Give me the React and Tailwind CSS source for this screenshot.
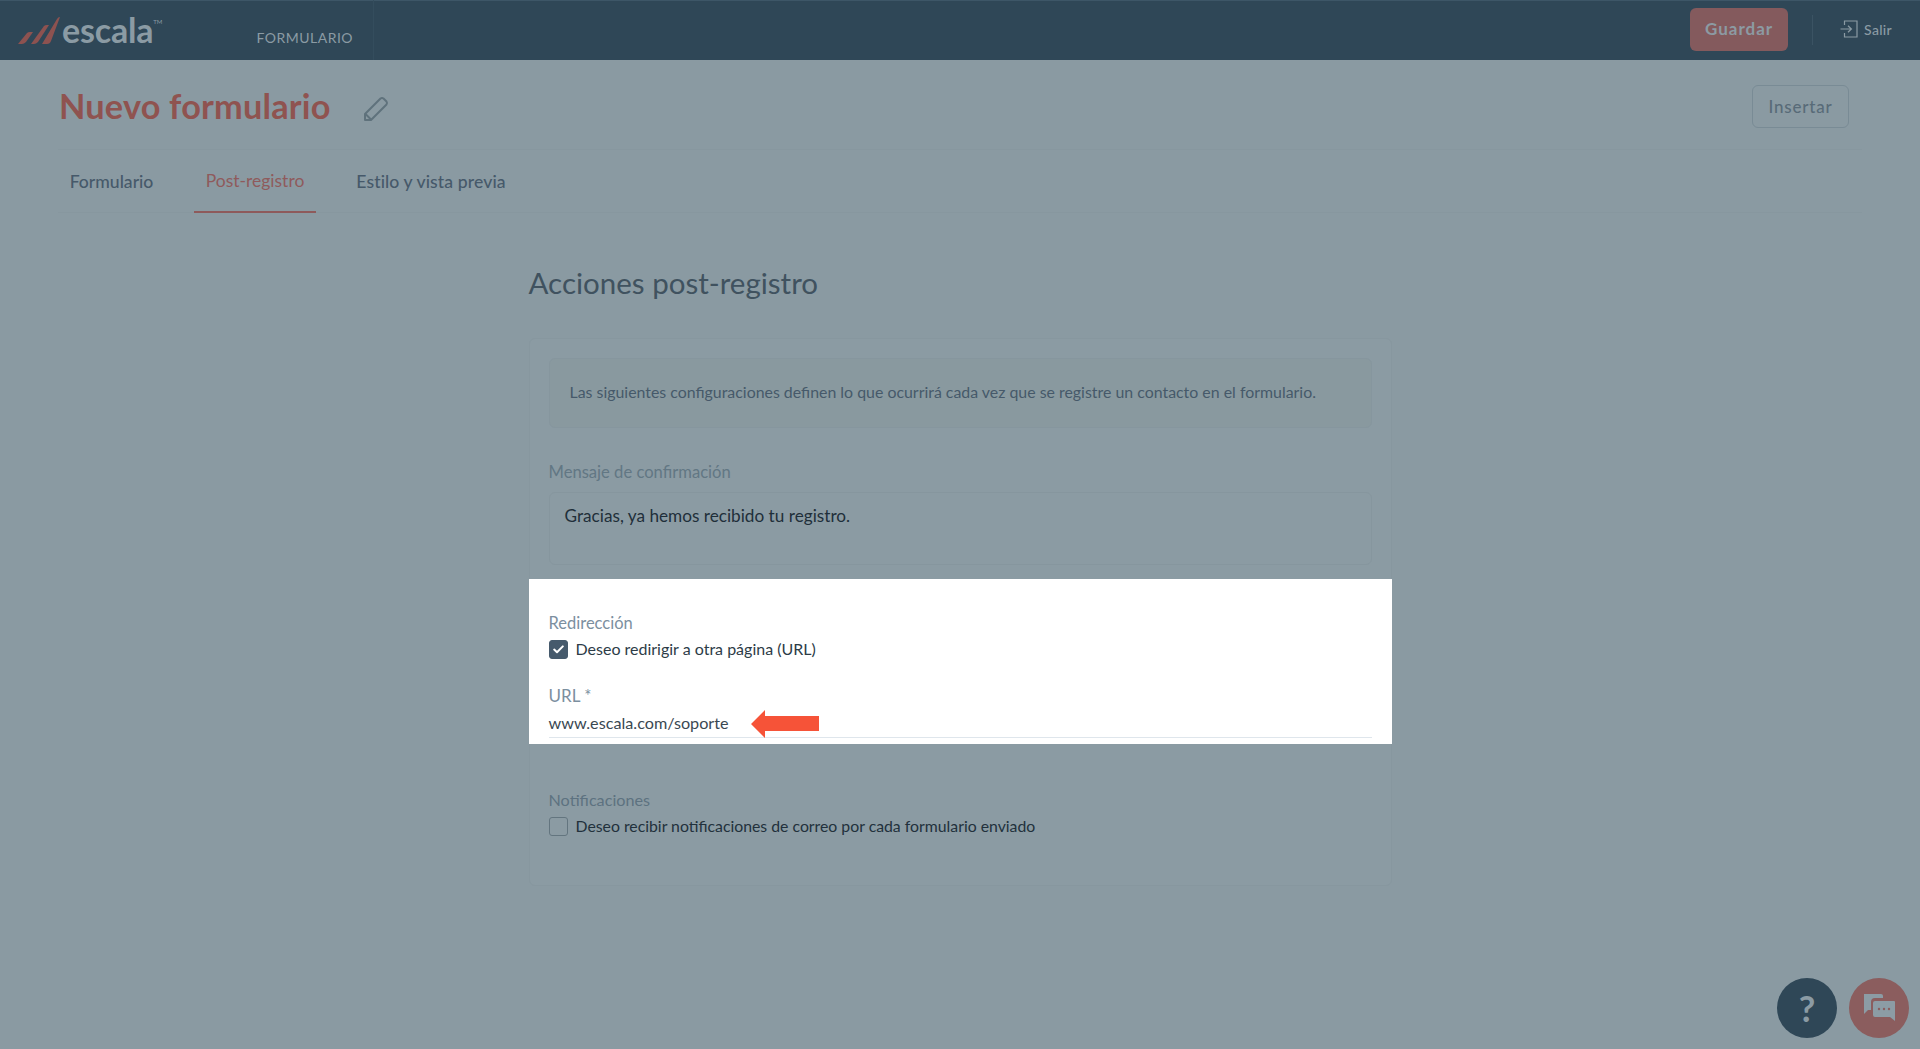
const FONT = "font-['Lato','Noto_Sans',sans-serif]";

function Logo() {
  return (
    <div className="flex items-center">
      <svg width="42" height="28" viewBox="0 0 42 28" className="mt-[3px]">
        <path d="M0 27 L9 16 Q10 15 12 15 H15 L8 25 Q6 27 4 27 Z" fill="#8d5250" />
        <path d="M13 27 L26 9 Q27 8 29 8 H31 L20 25 Q18 27 16 27 Z" fill="#8d5250" />
        <path d="M24 27 L39 2 Q40 0 42 0 L33 24 Q32 27 29 27 Z" fill="#8d5250" />
      </svg>
      <span className="ml-[2px] text-[34px] leading-none font-bold tracking-[-0.2px] text-[#8b9ba4]">escala</span>
      <span className="mb-[16px] text-[6px] leading-none text-[#8b9ba4]">TM</span>
    </div>
  );
}

function Tab({ label, active, className }) {
  return (
    <div
      className={`flex h-[63px] items-center justify-center pt-[2px] ${
        active ? "border-b-2 border-[#8e5a5b] text-[17.5px] font-normal text-[#8f5a5c]" : "text-[17.6px] font-medium text-[#46596a]"
      } ${className}`}
    >
      {label}
    </div>
  );
}

function Check({ checked }) {
  return (
    <span
      className={`flex h-[19px] w-[19px] shrink-0 items-center justify-center rounded-[3px] border ${
        checked ? "border-[#465a6c] bg-[#465a6c]" : "border-[#63757f]"
      }`}
    >
      {checked && (
        <svg width="11" height="9" viewBox="0 0 11 9" fill="none">
          <path d="M1.2 4.6 L4 7.2 L9.8 1.4" stroke="#fff" strokeWidth="2" strokeLinecap="round" strokeLinejoin="round" />
        </svg>
      )}
    </span>
  );
}

export default function App() {
  return (
    <div className={`relative flex h-[1049px] w-full flex-col overflow-hidden bg-[#8a9aa2] ${FONT}`}>
      {/* barra superior */}
      <header className="flex h-[60px] shrink-0 items-center border-t border-[#3d5667] bg-[#2f4757] pb-[2px] pl-[18px] pr-[28px]">
        <Logo />
        <span className="ml-[94px] mt-[15px] text-[14px] tracking-[0.5px] text-[#8b9ba4]">FORMULARIO</span>
        <div className="ml-[20px] h-[60px] w-px bg-[#344d5d]" />
        <button className="ml-auto h-[43px] w-[98px] rounded-[6px] bg-[#845a5d] pb-[2px] text-[17px] font-bold tracking-[1px] text-[#8c9aa3]">
          Guardar
        </button>
        <div className="ml-[24px] h-[30px] w-px bg-[#3b5363]" />
        <svg className="ml-[27px] mt-[-1px]" width="18" height="18" viewBox="0 0 18 18" fill="none" stroke="#8b9ba4" strokeWidth="1.2">
          <path d="M4.5 5 V1 H17 V17 H4.5 V13" />
          <path d="M0.5 9 H11 M8 5.8 L11.4 9 L8 12.2" />
        </svg>
        <span className="ml-[6px] text-[14px] font-medium tracking-[0.3px] text-[#8b9ba4]">Salir</span>
      </header>

      {/* titulo */}
      <div className="flex h-[89px] shrink-0 items-center pl-[59px] pr-[71px] pt-[4px]">
        <h1 className="text-[34.3px] font-bold leading-none tracking-[0.2px] text-[#8f5350]">Nuevo formulario</h1>
        <svg className="ml-[32px] mt-[4px]" width="26" height="26" viewBox="0 0 26 26" fill="none" stroke="#5f727c" strokeWidth="2" strokeLinejoin="round">
          <path d="M2 18 L17.5 2.5 Q19 1.5 20.5 2.5 L23.5 5.5 Q24.5 7 23.5 8.5 L8 24 H2 Z" />
          <path d="M2.5 18 L8 23.5" />
        </svg>
        <button className="ml-auto h-[43px] w-[97px] rounded-[6px] border border-[#798b95] text-[17px] font-medium tracking-[0.8px] text-[#586b78]">
          Insertar
        </button>
      </div>

      {/* pestanas */}
      <div className="mx-[58px] flex h-[64px] shrink-0 border-y border-[#87979f]">
        <Tab label="Formulario" className="mr-[29px] w-[107px]" />
        <Tab label="Post-registro" active className="w-[122px]" />
        <Tab label="Estilo y vista previa" className="ml-[17px] w-[196px] tracking-[0.1px]" />
      </div>

      <main className="mx-auto mt-[50px] flex w-[863px] flex-col">
        <h2 className="text-[29.5px] font-normal leading-[40px] text-[#40525f]">Acciones post-registro</h2>

        <div className="mt-[35px] h-[548px] rounded-[6px] border border-[#87979f] bg-[#8b9ba3]">
          <div className="px-[19px] pt-[19px]">
            <div className="flex h-[70px] items-center rounded-[6px] border border-[#86969e] bg-[#89999f] pb-[3px] pl-[20px] text-[15.9px] text-[#46596a]">
              Las siguientes configuraciones definen lo que ocurrirá cada vez que se registre un contacto en el formulario.
            </div>
            <label className="mt-[33px] block text-[16.6px] leading-[22px] text-[#627784]">Mensaje de confirmación</label>
            <div className="mt-[9px] h-[73px] rounded-[6px] border border-[#86969e] pl-[15px] pt-[11px] text-[17.2px] leading-[24px] text-[#1f2f3a]">
              Gracias, ya hemos recibido tu registro.
            </div>
          </div>

          {/* bloque resaltado */}
          <div className="mx-[-1px] mt-[14px] h-[165px] bg-white px-[20px] pt-[32px]">
            <label className="block text-[16.5px] leading-[24px] text-[#7c8f9f]">Redirección</label>
            <div className="mt-[4px] flex items-center">
              <Check checked />
              <span className="ml-[8px] text-[16px] leading-[20px] text-[#2d3c47]">Deseo redirigir a otra página (URL)</span>
            </div>
            <label className="mt-[25px] block text-[17px] leading-[24px] text-[#7c8f9f]">URL *</label>
            <div className="mt-[1px] flex h-[29px] items-center border-b border-[#dfe6ec]">
              <span className="text-[16.2px] leading-[20px] text-[#3a4852]">www.escala.com/soporte</span>
              <svg className="ml-[22px] mt-[1px]" width="68" height="28" viewBox="0 0 68 28">
                <path d="M0 14 L14 0 V6 H68 V21 H14 V28 Z" fill="#f65338" />
              </svg>
            </div>
          </div>

          <div className="px-[19px] pt-[44px]">
            <label className="block text-[16.2px] leading-[24px] text-[#5d7280]">Notificaciones</label>
            <div className="mt-[4px] flex items-center">
              <Check />
              <span className="ml-[8px] text-[15.8px] leading-[20px] text-[#22313c]">
                Deseo recibir notificaciones de correo por cada formulario enviado
              </span>
            </div>
          </div>
        </div>
      </main>

      {/* botones flotantes */}
      <div className="absolute bottom-[11px] right-[11px] flex gap-[12px]">
        <div className="flex h-[60px] w-[60px] items-center justify-center rounded-full bg-[#2f4757] text-[36px] font-bold leading-none text-[#8b9ba4]">
          ?
        </div>
        <div className="flex h-[60px] w-[60px] items-center justify-center rounded-full bg-[#8b5d5e]">
          <svg width="34" height="30" viewBox="0 0 34 30">
            <path d="M2 1 H19 Q21 1 21 3 V5 H13 Q9 5 9 9 V17 H6 L2 21 Z" fill="#8c9ca5" />
            <path d="M13 8 H32 Q33 8 33 9 V25 L33 28 L28 24 H13 Q11 24 11 22 V10 Q11 8 13 8 Z" fill="#8c9ca5" />
            <circle cx="17" cy="16" r="1.2" fill="#8b5d5e" />
            <circle cx="22" cy="16" r="1.2" fill="#8b5d5e" />
            <circle cx="27" cy="16" r="1.2" fill="#8b5d5e" />
          </svg>
        </div>
      </div>
    </div>
  );
}
